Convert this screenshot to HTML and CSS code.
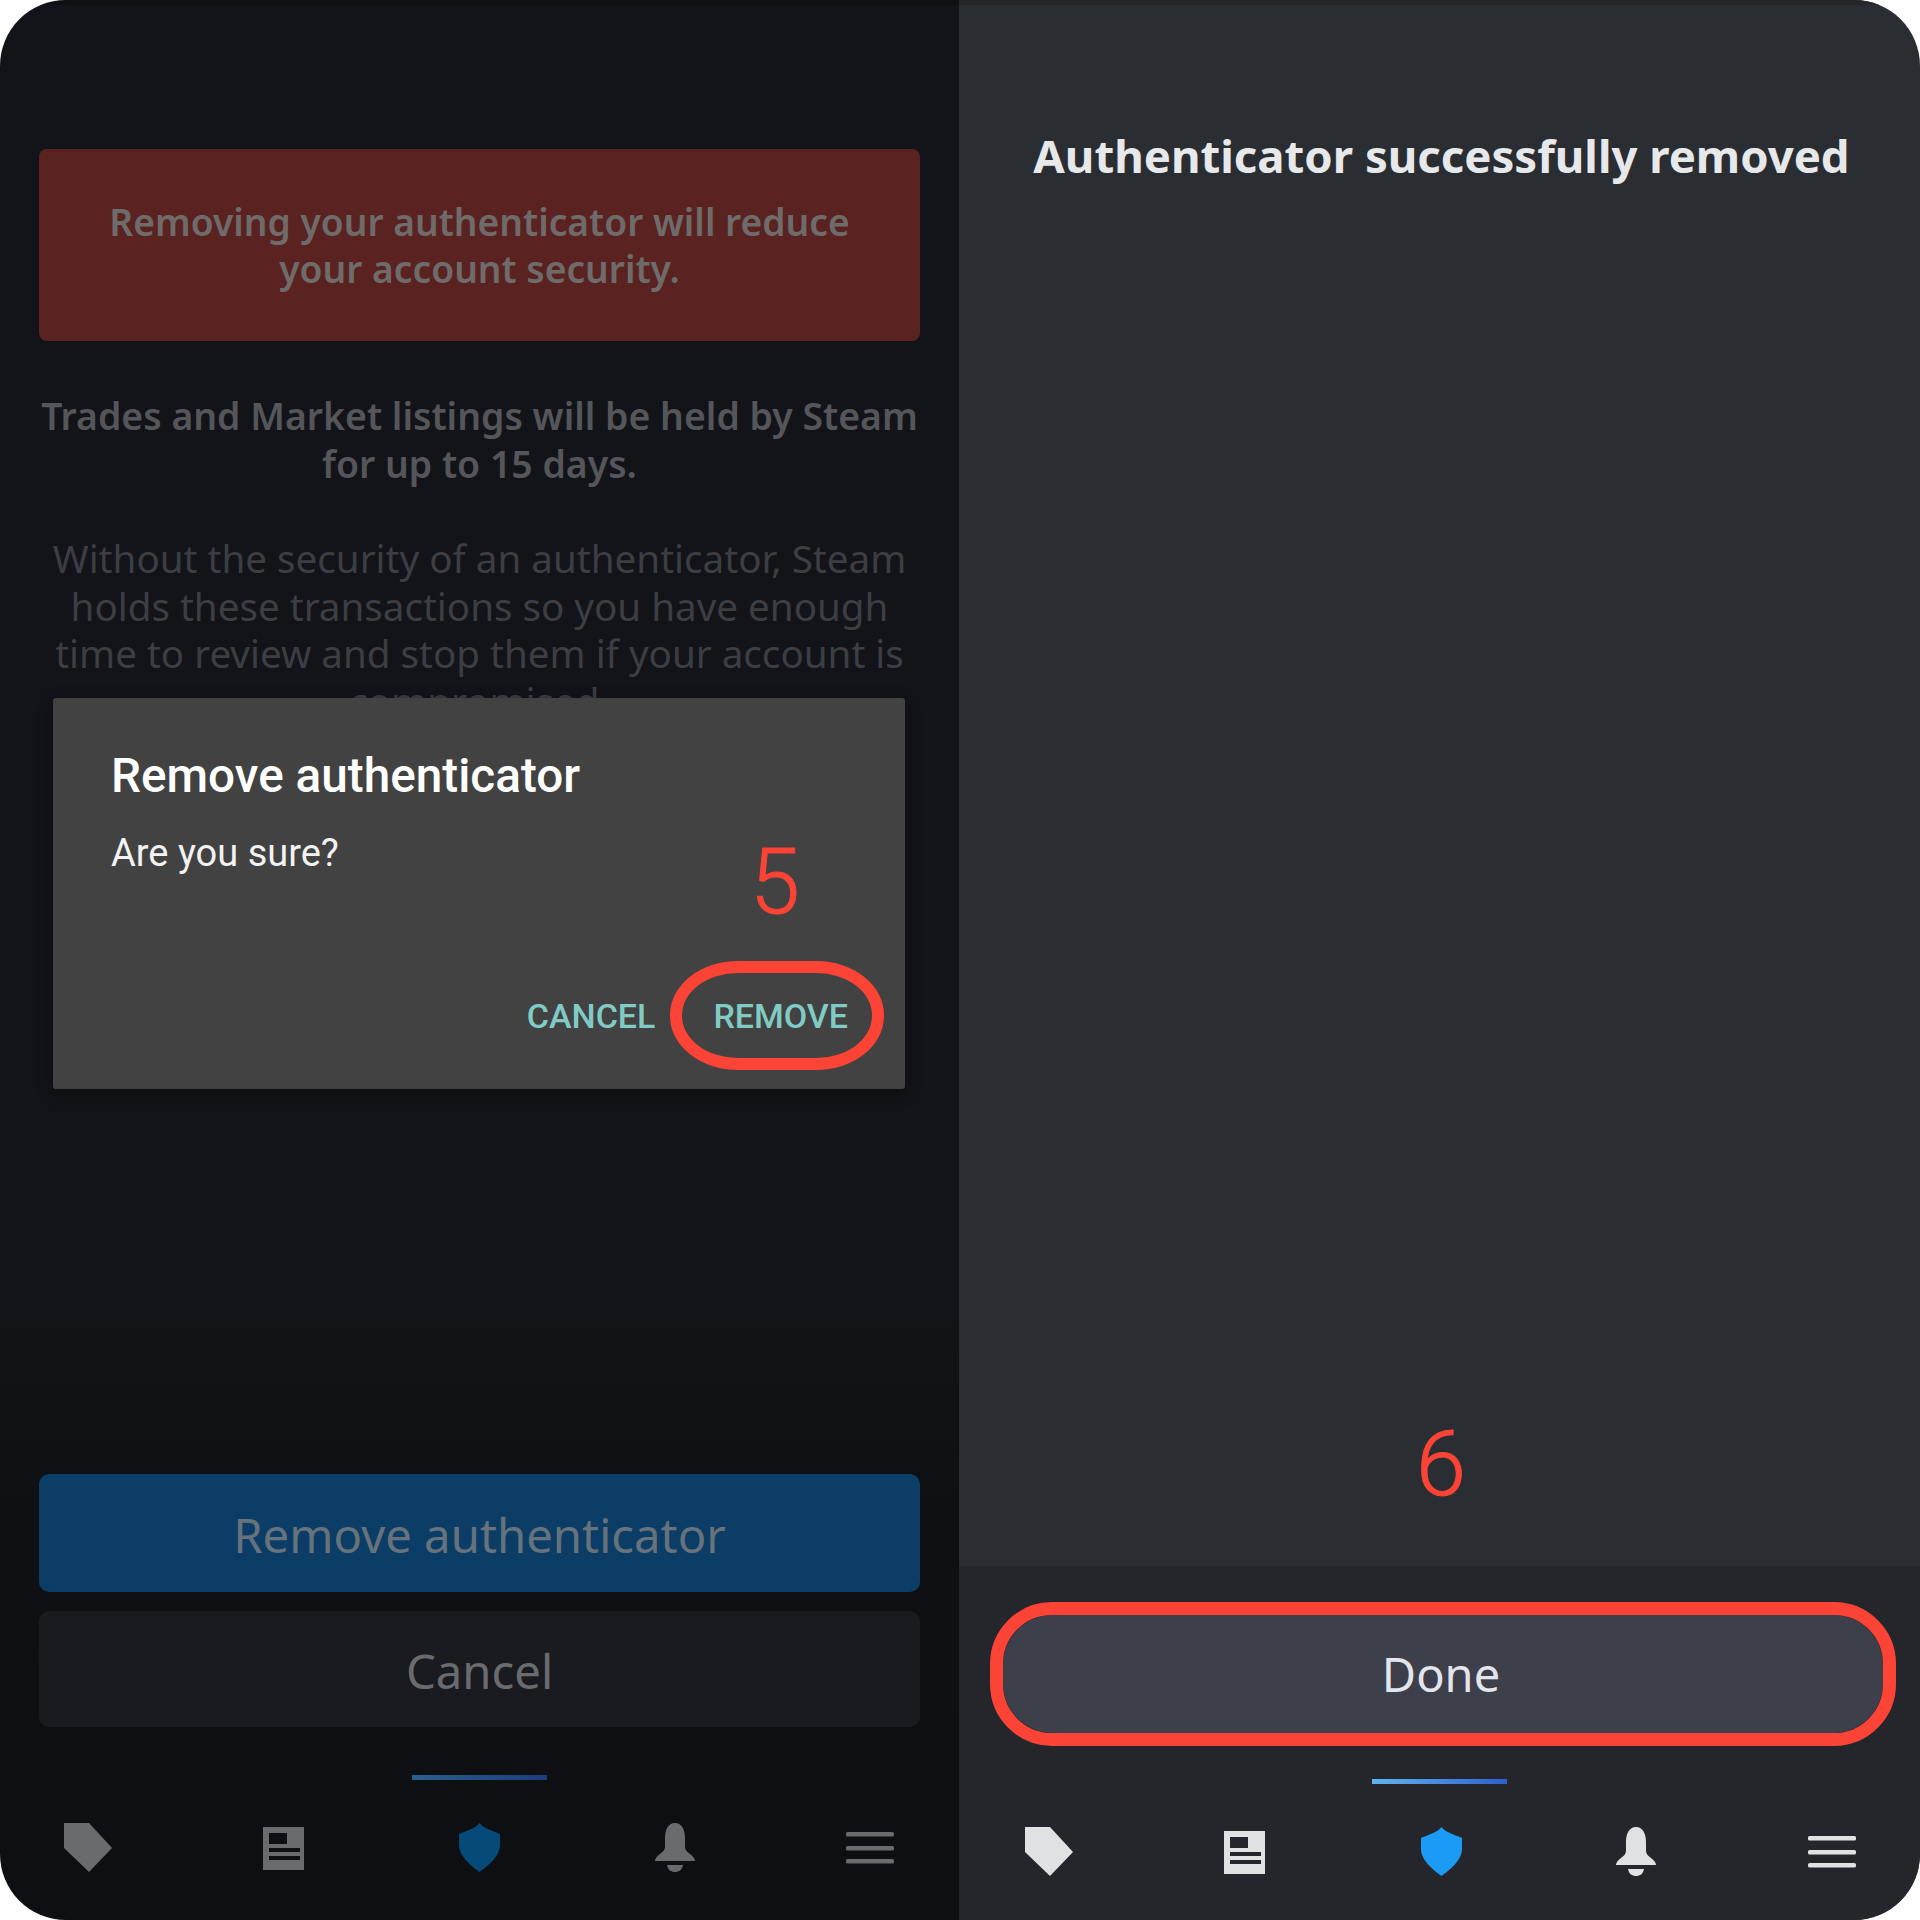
FILE: index.html
```html
<!DOCTYPE html>
<html lang="en">
<head>
    <meta charset="UTF-8">
    <meta name="viewport" content="width=device-width, initial-scale=1.0">
    <title>Remove authenticator</title>
    <link rel="stylesheet" href="styles.css">
</head>
<body>
    <svg class="icon-defs" width="0" height="0" aria-hidden="true">
        <symbol id="icon-tag" viewBox="0 0 60 60">
            <path d="M6 5H31L54 30L31 54L6 30Z"/>
        </symbol>
        <symbol id="icon-news" viewBox="0 0 60 60">
            <path fill-rule="evenodd" d="M9 9H50V52H9ZM15 15V26H33V15ZM15 30V34H46V30ZM15 38V42H46V38Z"/>
        </symbol>
        <symbol id="icon-shield" viewBox="0 0 60 60">
            <path d="M30.500 5C34 10 44 13 51 16V27C51 38 39 48 30.500 54C22 48 10 38 10 27V16C17 13 27 10 30.500 5Z"/>
        </symbol>
        <symbol id="icon-bell" viewBox="0 0 60 60">
            <path d="M30 5C37 5 40 12 40 20V29C40 35 50 37 50 43H10C10 37 20 35 20 29V20C20 12 23 5 30 5Z"/>
            <path d="M22 47H38C37 52 34 54 30 54C26 54 23 52 22 47Z"/>
        </symbol>
        <symbol id="icon-menu" viewBox="0 0 60 60">
            <rect x="6" y="14" width="48" height="4.5" rx="1.5"/>
            <rect x="6" y="28" width="48" height="4.5" rx="1.5"/>
            <rect x="6" y="41" width="48" height="4.5" rx="1.5"/>
        </symbol>
    </svg>

    <div class="frame">
        <!-- Step 5: confirm dialog over the dimmed page -->
        <section class="pane pane-dim">
            <div class="content">
                <div class="warning">Removing your authenticator will reduce your account security.</div>
                <p class="lead">Trades and Market listings will be held by Steam for up to 15 days.</p>
                <p class="body-text">Without the security of an authenticator, Steam holds these transactions so you have enough time to review and stop them if your account is compromised.</p>
            </div>

            <div class="actions">
                <div class="btn btn-primary">Remove authenticator</div>
                <div class="btn btn-secondary">Cancel</div>
            </div>

            <div class="tabbar">
                <div class="indicator"></div>
                <nav class="nav">
                    <svg class="nav-icon"><use href="#icon-tag"/></svg>
                    <svg class="nav-icon"><use href="#icon-news"/></svg>
                    <svg class="nav-icon nav-active"><use href="#icon-shield"/></svg>
                    <svg class="nav-icon"><use href="#icon-bell"/></svg>
                    <svg class="nav-icon"><use href="#icon-menu"/></svg>
                </nav>
            </div>

            <div class="dialog">
                <h2 class="dialog-title">Remove authenticator</h2>
                <p class="dialog-text">Are you sure?</p>
                <div class="dialog-buttons">
                    <span class="dialog-btn">CANCEL</span>
                    <span class="dialog-btn dialog-btn-marked">REMOVE</span>
                </div>
                <span class="step step-five">5</span>
            </div>
        </section>

        <!-- Step 6: success page -->
        <section class="pane pane-done">
            <div class="done-main">
                <h1 class="done-title">Authenticator successfully removed</h1>
                <span class="step step-six">6</span>
            </div>
            <div class="done-footer">
                <div class="done-btn">Done</div>
                <div class="tabbar tabbar-done">
                    <div class="indicator"></div>
                    <nav class="nav">
                        <svg class="nav-icon"><use href="#icon-tag"/></svg>
                        <svg class="nav-icon"><use href="#icon-news"/></svg>
                        <svg class="nav-icon nav-active"><use href="#icon-shield"/></svg>
                        <svg class="nav-icon"><use href="#icon-bell"/></svg>
                        <svg class="nav-icon"><use href="#icon-menu"/></svg>
                    </nav>
                </div>
            </div>
        </section>
    </div>
</body>
</html>
```

FILE: styles.css
```css
html, body {
    margin: 0;
    padding: 0;
    background: #fff;
}

body {
    font-family: "Noto Sans", "Open Sans", sans-serif;
}

.icon-defs {
    position: absolute;
}

.frame {
    display: grid;
    grid-template-columns: 959px 961px;
    width: 1920px;
    height: 1920px;
    border-radius: 66px;
    overflow: hidden;
}

.pane {
    position: relative;
    display: flex;
    flex-direction: column;
    height: 1920px;
}

/* left pane */
.pane-dim {
    background: linear-gradient(#0f1014 0, #0f1014 5px, #121419 5px, #121419 1300px, #0f1013 1500px, #0e0f13 100%);
}

.content {
    flex: 1;
    padding: 149px 39px 0;
    text-align: center;
}

.warning {
    display: flex;
    align-items: center;
    justify-content: center;
    height: 192px;
    padding: 0 60px;
    border-radius: 8px;
    background: #5a2321;
    color: #6f6b6a;
    font-size: 37.2px;
    font-weight: 600;
    line-height: 47.5px;
}

.lead {
    margin: 51px 0 0;
    color: #55565a;
    font-size: 37.4px;
    font-weight: 600;
    line-height: 47.5px;
}

.body-text {
    margin: 48px 0 0;
    color: #3c3e43;
    font-size: 38.6px;
    line-height: 47.5px;
}

.actions {
    display: flex;
    flex-direction: column;
    gap: 19px;
    padding: 0 39px;
}

.btn {
    display: flex;
    align-items: center;
    justify-content: center;
    box-sizing: border-box;
    padding-top: 3px;
    border-radius: 10px;
    font-size: 47.3px;
}

.btn-primary {
    height: 118px;
    background: #0b3d66;
    color: #66727c;
}

.btn-secondary {
    height: 116px;
    background: #1a1b20;
    color: #6a6b6e;
}

/* tab bar */
.tabbar {
    padding-top: 48px;
    padding-bottom: 42px;
}

.indicator {
    width: 135px;
    height: 5px;
    margin: 0 auto 38px;
    background: linear-gradient(90deg, #2a5f8c, #1c3d7c);
}

.nav {
    display: flex;
    justify-content: space-between;
    padding: 0 59px 0 58px;
}

.nav-icon {
    width: 60px;
    height: 60px;
    fill: #6a6b6d;
}

.nav-active {
    fill: #054a78;
}

/* dialog */
.dialog {
    position: absolute;
    top: 698px;
    left: 53px;
    box-sizing: border-box;
    width: 852px;
    height: 391px;
    padding: 50px 58px 0;
    background: #424242;
    border-radius: 3px;
    box-shadow: 0 4px 16px rgba(0, 0, 0, 0.35);
    font-family: Roboto, sans-serif;
}

.dialog-title {
    margin: 0;
    color: #fff;
    font-size: 47.7px;
    font-weight: 500;
    line-height: 56px;
}

.dialog-text {
    margin: 24px 0 0;
    color: #f2f2f2;
    font-size: 38px;
    line-height: 50px;
}

.dialog-buttons {
    position: absolute;
    right: 57px;
    top: 298px;
    display: flex;
    gap: 58px;
}

.dialog-btn {
    position: relative;
    color: #80cbc4;
    font-size: 34px;
    font-weight: 500;
    line-height: 40px;
}

.dialog-btn-marked::after {
    content: "";
    position: absolute;
    top: -35px;
    left: -43px;
    width: 190px;
    height: 85px;
    border: 12px solid #fb4436;
    border-radius: 68px / 54px;
}

.step {
    position: absolute;
    color: #fb4436;
    font-family: Roboto, sans-serif;
    font-size: 90px;
    font-weight: 300;
    line-height: 90px;
    -webkit-text-stroke: 1px #fb4436;
}

.step-five {
    top: 140px;
    left: 697px;
}

/* right pane */
.pane-done {
    background: #2a2d32;
}

.done-main {
    position: relative;
    flex: 1;
    border-top: 5px solid #25272b;
}

.done-title {
    margin: 0;
    padding: 121px 0 0 4px;
    color: #e6e8ea;
    font-size: 45.5px;
    font-weight: 700;
    line-height: 58px;
    text-align: center;
}

.step-six {
    top: 1415px;
    left: 457px;
}

.done-footer {
    padding-top: 49px;
    background: #24262b;
}

.done-btn {
    position: relative;
    display: flex;
    align-items: center;
    justify-content: center;
    height: 118px;
    margin: 0 37px 0 44px;
    padding-right: 4px;
    border-radius: 50px;
    background: #3d3f4b;
    color: #e3e5ec;
    font-size: 47px;
}

.done-btn::after {
    content: "";
    position: absolute;
    inset: -13px;
    border: 13px solid #fb4436;
    border-radius: 62px;
}

.tabbar-done {
    padding-top: 46px;
    padding-bottom: 38px;
}

.tabbar-done .indicator {
    background: linear-gradient(90deg, #60b4ee, #2e60d0);
}

.tabbar-done .nav {
    padding: 0 58px 0 60px;
}

.tabbar-done .nav-icon {
    fill: #dfe1e3;
}

.tabbar-done .nav-active {
    fill: #1b9bf5;
}
```
